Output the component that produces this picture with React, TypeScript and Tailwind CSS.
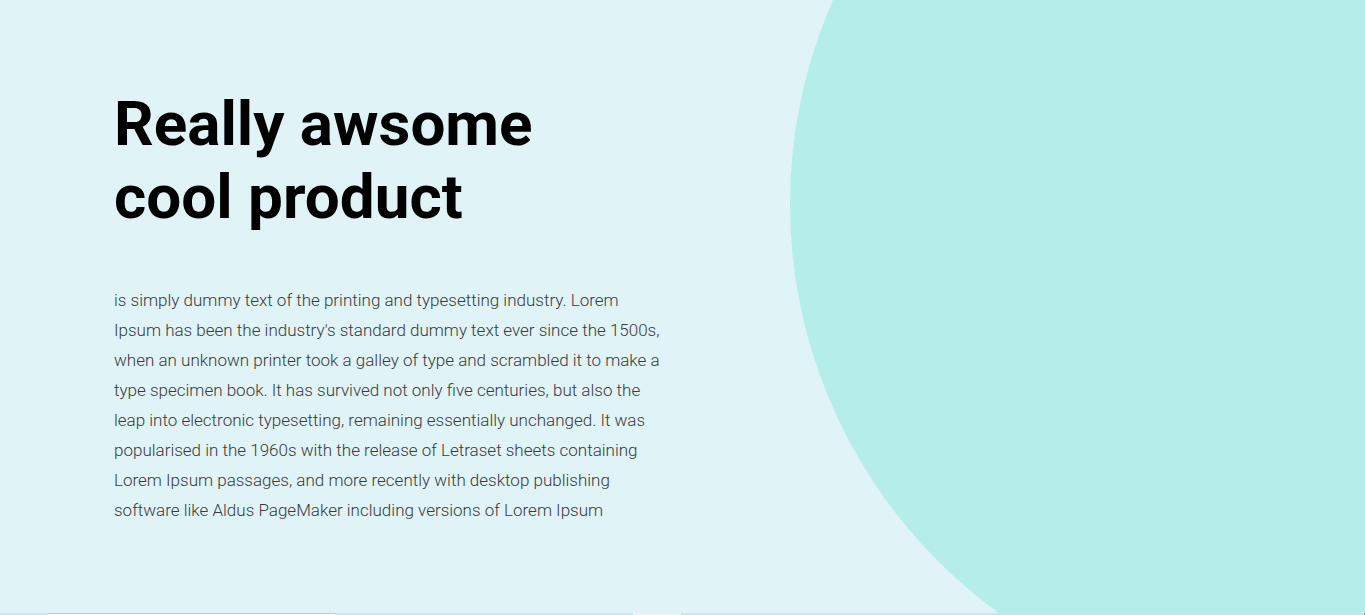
import React from "react";

const lines = [
  "is simply dummy text of the printing and typesetting industry. Lorem",
  "Ipsum has been the industry's standard dummy text ever since the 1500s,",
  "when an unknown printer took a galley of type and scrambled it to make a",
  "type specimen book. It has survived not only five centuries, but also the",
  "leap into electronic typesetting, remaining essentially unchanged. It was",
  "popularised in the 1960s with the release of Letraset sheets containing",
  "Lorem Ipsum passages, and more recently with desktop publishing",
  "software like Aldus PageMaker including versions of Lorem Ipsum",
];

export default function App() {
  return (
    <div className="w-[1365px] h-[615px] overflow-hidden flex flex-col bg-[#e0f3f6]">
      <section className="relative h-[613px] overflow-hidden bg-[#e0f3f6]">
        <div className="absolute left-[790px] top-[-301px] w-[1010px] h-[1010px] rounded-full bg-[#b5ede9]" />
        <div className="relative pl-[114px] pt-[87px]">
          <h1
            className="text-[62px] leading-[73px] font-bold text-black"
            style={{ fontFamily: "Roboto, 'Noto Sans', sans-serif" }}
          >
            Really awsome
            <br />
            cool product
          </h1>
          <p
            className="mt-[52px] text-[17px] leading-[30px] font-light text-[#3a3a3a]"
            style={{ fontFamily: "Roboto, 'Noto Sans', sans-serif" }}
          >
            {lines.map((l, i) => (
              <span key={i} className="block whitespace-nowrap">
                {l}
              </span>
            ))}
          </p>
        </div>
      </section>
      <div className="flex h-[2px]">
        <div className="w-[48px] bg-[#cfe4ea]" />
        <div className="w-[287px] bg-white border-t border-[#c8c8c8]" />
        <div className="w-[298px] bg-[#cde3ea]" />
        <div className="w-[48px] bg-[#eef3f5]" />
        <div className="flex-1 bg-[#d3dfe9]" />
        <div className="w-[1px] bg-[#999]" />
      </div>
    </div>
  );
}
